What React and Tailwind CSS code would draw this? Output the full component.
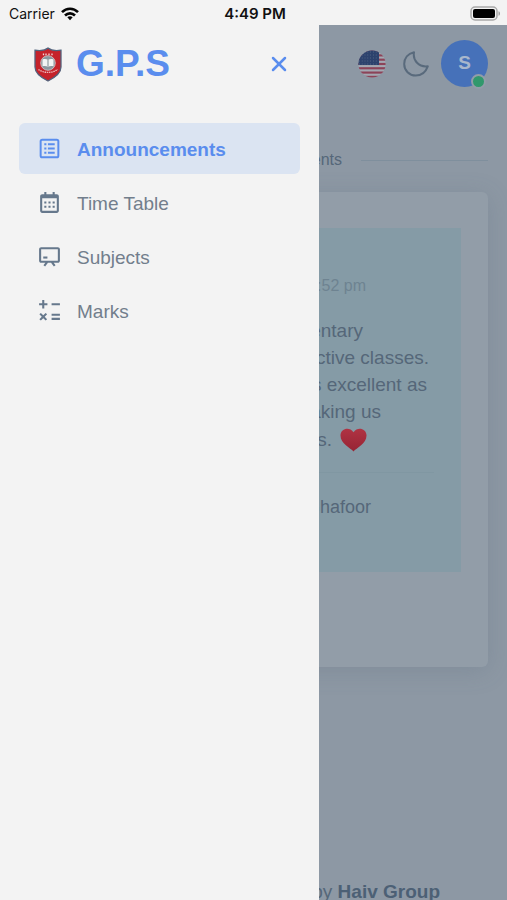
import React from "react";
import { BiCalendar, BiChalkboard, BiMath } from "react-icons/bi";
import { X } from "lucide-react";

function Wifi() {
  return (
    <svg viewBox="0 0 18 14" className="h-[14px] w-[18px]" fill="none" stroke="#050505" strokeWidth="2.6" aria-hidden="true">
      <path d="M1 5.2C5.5.6 12.500.6 17 5.200" />
      <path d="M4 8.500c2.900-2.900 7.100-2.900 10 0" />
      <path d="M6.300 10.300c1.600-1.500 3.800-1.500 5.400 0L9 13.200z" fill="#050505" stroke="none" />
    </svg>
  );
}

function Battery() {
  return (
    <svg viewBox="0 0 31 15" className="h-[15px] w-[31px]" aria-hidden="true">
      <rect x="1" y="1" width="26" height="13" rx="4" fill="#f3f3f3" stroke="#a9a9a9" strokeWidth="1.500" />
      <rect x="3" y="3" width="22" height="9" rx="2" fill="#000" />
      <path d="M28.500 5.200c2 .6 2 4 0 4.600z" fill="#a0a0a0" />
    </svg>
  );
}

function Crest() {
  return (
    <svg viewBox="0 0 28 35" className="h-[35px] w-7" aria-hidden="true">
      <path d="M14 1C11 3.500 6 4 1 3.200V20c0 6.500 6 10.500 13 14 7-3.500 13-7.500 13-14V3.200C22 4 17 3.500 14 1Z" fill="#c5222b" stroke="#52637d" strokeWidth="1.300" />
      <path d="M9.500 6.500v1.800M12 6.500v1.800M15 6.500v1.800M18 6.500v1.800" stroke="#f1d7d8" strokeWidth="1.300" />
      <circle cx="14" cy="16" r="7.300" fill="#8b979f" stroke="#d9c7c9" strokeWidth=".8" />
      <path d="M8.500 12.500c2-.8 4-.6 5.500.4 1.500-1 3.500-1.200 5.500-.4v6.800c-2-.7-4-.5-5.500.5-1.500-1-3.500-1.200-5.500-.5z" fill="#f2f4f4" />
      <path d="M14 13v6.500" stroke="#7d8b90" strokeWidth="1" />
      <path d="M4.500 22.500c5 3.800 14 3.800 19 0" stroke="#eeb9bc" strokeWidth="1.300" fill="none" strokeDasharray="1.500 .7" />
    </svg>
  );
}

function ListBox() {
  return (
    <svg viewBox="0 0 24 24" className="size-[25px]" fill="none" stroke="currentColor" strokeWidth="1.900" aria-hidden="true">
      <rect x="3.500" y="3.500" width="17" height="17" rx="1.500" />
      <path d="M7 8h2M7 12h2M7 16h2M10.500 8H17M10.500 12H17M10.500 16H17" />
    </svg>
  );
}

function Moon() {
  return (
    <svg viewBox="0 0 26 26" className="size-[26px]" fill="none" stroke="currentColor" strokeWidth="2" strokeLinejoin="round" aria-hidden="true">
      <path d="M11 1.200C9.500 9.500 16 16.500 24.800 15.300 22.500 21.500 18.500 24.600 12.700 24.600 6.300 24.600 1.200 19.500 1.200 13.100 1.200 7.300 5 2.600 11 1.200Z" />
    </svg>
  );
}

function Flag() {
  return (
    <svg viewBox="0 0 28 28" className="size-7" aria-hidden="true">
      <clipPath id="flag-round"><circle cx="14" cy="14" r="13.600" /></clipPath>
      <g clipPath="url(#flag-round)">
        <rect width="28" height="28" fill="#a3a8b2" />
        {[0, 4.300, 8.600, 12.900, 17.200, 21.500, 25.800].map((y) => (
          <rect key={y} y={y} width="28" height="2.150" fill="#8c4358" />
        ))}
        <rect width="21" height="15" fill="#2d426d" />
        {[2, 5, 8, 11, 14].map((y) => (
          <path key={y} d={`M1 ${y}H20.500`} stroke="#667791" strokeWidth=".8" strokeDasharray=".8 2" />
        ))}
      </g>
    </svg>
  );
}

function Heart() {
  return (
    <svg viewBox="0 0 27 24" className="h-6 w-[27px]" role="img" aria-label="heart">
      <defs>
        <linearGradient id="heart-fill" x1="0" y1="0" x2="0" y2="1">
          <stop offset="0" stopColor="#b03343" />
          <stop offset="1" stopColor="#962434" />
        </linearGradient>
      </defs>
      <path d="M13.500 23.500C10.500 20 0 15.500.5 7 .8.500 9.500-1.800 13.500 4.200 17.500-1.800 26.200.500 26.500 7c.5 8.500-10 13-13 16.500Z" fill="url(#heart-fill)" />
    </svg>
  );
}

const links = [
  { label: "Announcements", icon: <ListBox />, active: true },
  { label: "Time Table", icon: <BiCalendar size={25} /> },
  { label: "Subjects", icon: <BiChalkboard size={25} /> },
  { label: "Marks", icon: <BiMath size={25} /> },
];

function Drawer() {
  return (
    <aside className="absolute inset-y-0 left-0 w-[63%] bg-[#f3f3f3]">
      <div className="flex h-[78px] items-center pr-7 pl-[34px]">
        <Crest />
        <span className="ml-[14px] text-[37px] leading-10 font-bold text-[#5a8dee]">G.P.S</span>
        <button type="button" aria-label="Close menu" className="ml-auto text-[#5a8dee]">
          <X size={24} strokeWidth={2.5} />
        </button>
      </div>
      <nav className="mt-5 flex flex-col gap-[3px] px-[19px]">
        {links.map(({ label, icon, active }) => (
          <a
            key={label}
            href="#"
            className={
              active
                ? "flex h-[51px] items-center gap-[15px] rounded-md bg-[#dbe4f2] pl-[18px] text-[19px] leading-[25px] font-bold text-[#5a8dee]"
                : "flex h-[51px] items-center gap-[15px] rounded-md pl-[18px] text-[19px] leading-[25px] text-[#727e8c]"
            }
          >
            <span className={active ? "" : "text-[#66788c]"}>{icon}</span>
            <span className="pt-0.5">{label}</span>
          </a>
        ))}
      </nav>
    </aside>
  );
}

export default function App() {
  return (
    <div className="flex h-screen flex-col overflow-hidden bg-[#f3f3f3] font-['Liberation_Sans',Arial,sans-serif]">
      <div className="grid h-[25px] shrink-0 grid-cols-3 items-center pt-0.5 pr-[6px] pl-[9px] font-[Inter,sans-serif] text-[15px] leading-5 text-[#111]">
        <span className="flex items-center gap-[6px] text-[14px]">Carrier <Wifi /></span>
        <span className="text-center font-semibold">4:49 PM</span>
        <span className="flex justify-end"><Battery /></span>
      </div>
      <div className="relative flex min-h-0 flex-1 flex-col bg-[#8d98a4] text-[#556779]">
        <header className="flex h-[77px] shrink-0 items-center justify-end pr-[19px]">
          <button type="button" aria-label="Language"><Flag /></button>
          <button type="button" aria-label="Dark mode" className="ml-[17px] text-[#596a7c]"><Moon /></button>
          <button type="button" aria-label="Account" className="relative ml-3 size-[47px] rounded-full bg-[#4671b9] text-[19px] font-bold text-[#a8b7cc]">
            S
            <span className="absolute right-0.5 -bottom-0.5 size-[15px] rounded-full border-2 border-[#929da8] bg-[#31986c]" />
          </button>
        </header>
        <main className="px-[19px]">
          <div className="mt-[46px] flex h-6 items-center gap-[19px] text-[16px]">
            <span className="h-px flex-1 bg-[#7f8f9d]" />
            <h1>Announcements</h1>
            <span className="h-px w-[127px] bg-[#7f8f9d]" />
          </div>
          <section className="mt-5 rounded-md bg-[#929da8] px-[27px] pt-9 pb-[95px] shadow-[0_4px_24px_rgba(80,100,120,0.22)]">
            <article className="h-[344px] bg-[#859ba6] px-[27px] pt-[46px] text-right text-[18px] leading-[27px]">
              <p className="h-6 pr-[68px] text-[16px] leading-6 text-[#6e8391]">2:52 pm</p>
              <div className="pt-[19px] text-[19px]">
                <p className="pr-[71px]">elementary</p>
                <p className="pr-[5px]">interactive classes.</p>
                <p className="pr-[7px]">is excellent as</p>
                <p className="pr-[53px]">making us</p>
                <p className="flex h-[29px] items-center justify-end gap-2 pr-[67px]">students. <Heart /></p>
              </div>
              <hr className="mt-[18px] border-[#8097a2]" />
              <p className="mt-[21px] pr-[63px]">Ghafoor</p>
            </article>
          </section>
        </main>
        <footer className="mt-auto h-5 shrink-0 pr-[67px] text-right text-[19px] leading-6">
          by <strong className="text-[#4c6075]">Haiv Group</strong>
        </footer>
        <Drawer />
      </div>
    </div>
  );
}
